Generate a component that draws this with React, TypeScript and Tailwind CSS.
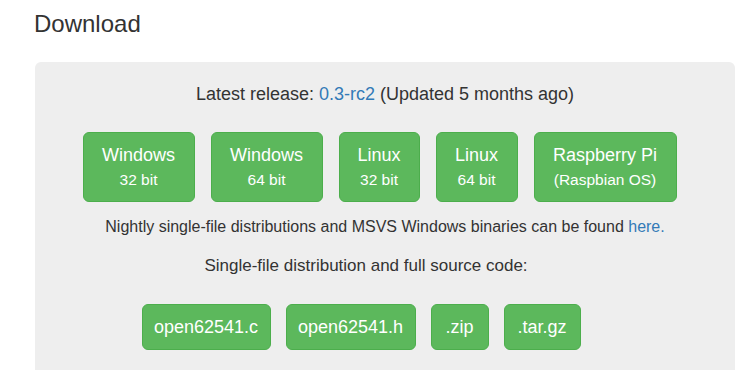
import React from 'react'

const platforms = [
  { name: 'Windows', sub: '32 bit', w: 'w-[112px]' },
  { name: 'Windows', sub: '64 bit', w: 'w-[112px]' },
  { name: 'Linux', sub: '32 bit', w: 'w-[81px]' },
  { name: 'Linux', sub: '64 bit', w: 'w-[82px]' },
  { name: 'Raspberry Pi', sub: '(Raspbian OS)', w: 'w-[143px]' },
]

const sources = [
  { label: 'open62541.c', w: 'w-[129px]' },
  { label: 'open62541.h', w: 'w-[130px]' },
  { label: '.zip', w: 'w-[58px]' },
  { label: '.tar.gz', w: 'w-[77px]' },
]

export default function App() {
  return (
    <div
      className="min-h-screen bg-white text-[#333] pl-[35px] pr-[16px]"
      style={{ fontFamily: '"Liberation Sans", Arial, sans-serif' }}
    >
      <h2 className="pt-[11px] -ml-px text-[24px] leading-[26px] font-normal">Download</h2>

      <div className="mt-[25px] w-[700px] rounded-md bg-[#eeeeee] pt-[19px] pb-10">
        <p className="text-center text-[18px] leading-[26px]">
          Latest release: <a className="text-[#337ab7]">0.3-rc2</a> (Updated 5 months ago)
        </p>

        <div className="mt-[25px] flex justify-center gap-4 pr-[11px]">
          {platforms.map((p, i) => (
            <a
              key={i}
              className={`${p.w} flex flex-col items-center rounded-md border border-[#4cae4c] bg-[#5cb85c] py-[9px] text-white`}
            >
              <span className="text-[18px] leading-[26px] whitespace-nowrap">{p.name}</span>
              <span className="text-[15.5px] leading-[24px] whitespace-nowrap">{p.sub}</span>
            </a>
          ))}
        </div>

        <p className="mt-[14px] text-center text-[16px] leading-[22px]">
          Nightly single-file distributions and MSVS Windows binaries can be found{' '}
          <a className="text-[#337ab7]">here.</a>
        </p>

        <p className="mt-[16px] pr-[38px] text-center text-[17px] leading-[24px]">
          Single-file distribution and full source code:
        </p>

        <div className="mt-[26px] flex justify-center gap-[15px] pr-[48px]">
          {sources.map((s) => (
            <a
              key={s.label}
              className={`${s.w} flex justify-center rounded-md border border-[#4cae4c] bg-[#5cb85c] py-[10px] text-[18px] leading-[24px] text-white whitespace-nowrap`}
            >
              {s.label}
            </a>
          ))}
        </div>
      </div>
    </div>
  )
}
